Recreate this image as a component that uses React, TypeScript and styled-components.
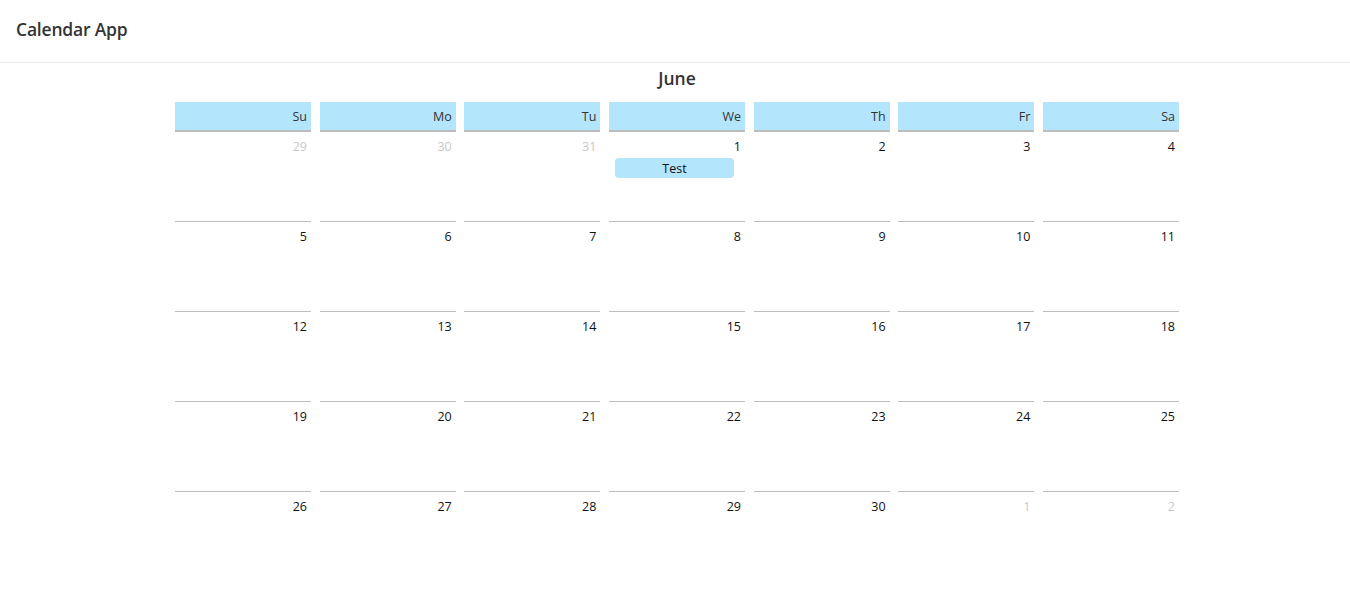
import styled, { createGlobalStyle } from "styled-components"

const GlobalStyle = createGlobalStyle`
  html, body {
    margin: 0;
    padding: 0;
    background: #fff;
    font-family: "Open Sans", "Noto Sans", sans-serif;
    color: #222;
  }
`

const TopBar = styled.header`
  height: 63px;
  display: flex;
  align-items: center;
  padding: 0 16px 4px;
  box-sizing: border-box;
  border-bottom: 1px solid #ebebeb;
`

const AppTitle = styled.h1`
  margin: 0;
  font-size: 17.5px;
  font-weight: 600;
  color: #333;
  letter-spacing: -0.2px;
`

const Main = styled.main`
  width: 1004px;
  margin: 0 0 0 175px;
`

const MonthTitle = styled.h2`
  margin: 0 0 9px;
  height: 30px;
  display: flex;
  align-items: center;
  justify-content: center;
  font-size: 17.5px;
  font-weight: 600;
  color: #333;
`

const Grid = styled.div`
  display: grid;
  grid-template-columns: repeat(7, 1fr);
  column-gap: 8.67px;
`

const DayHead = styled.div`
  height: 28px;
  background: #b3e5fc;
  border-bottom: 2px solid #bdbdbd;
  display: flex;
  align-items: center;
  justify-content: flex-end;
  padding-right: 4px;
  font-size: 12.5px;
  color: #333;
`

const Cell = styled.div<{ $first?: boolean }>`
  height: 89px;
  margin-top: ${p => (p.$first ? "-1px" : "0")};
  border-top: ${p => (p.$first ? "none" : "1px solid #bdbdbd")};
  padding-top: ${p => (p.$first ? "1px" : "0")};
  display: flex;
  flex-direction: column;
`

const DayNum = styled.div<{ $muted?: boolean }>`
  text-align: right;
  padding: 6px 4px 0 0;
  font-size: 12.5px;
  line-height: 17px;
  color: ${p => (p.$muted ? "#c8c8c8" : "#111")};
`

const Event = styled.div`
  margin: 3px 0 0 6px;
  width: 119px;
  height: 20px;
  border-radius: 4px;
  background: #b3e5fc;
  display: flex;
  align-items: center;
  justify-content: center;
  font-size: 12.5px;
  color: #111;
`

const days = ["Su", "Mo", "Tu", "We", "Th", "Fr", "Sa"]

const cells: { n: number; muted?: boolean; events?: string[] }[] = [
  { n: 29, muted: true },
  { n: 30, muted: true },
  { n: 31, muted: true },
  { n: 1, events: ["Test"] },
  ...Array.from({ length: 29 }, (_, i) => ({ n: i + 2 })),
  { n: 1, muted: true },
  { n: 2, muted: true },
]

export default function App() {
  return (
    <>
      <GlobalStyle />
      <TopBar>
        <AppTitle>Calendar App</AppTitle>
      </TopBar>
      <Main>
        <MonthTitle>June</MonthTitle>
        <Grid>
          {days.map(d => (
            <DayHead key={d}>{d}</DayHead>
          ))}
          {cells.map((c, i) => (
            <Cell key={i} $first={i < 7}>
              <DayNum $muted={c.muted}>{c.n}</DayNum>
              {c.events?.map(e => (
                <Event key={e}>{e}</Event>
              ))}
            </Cell>
          ))}
        </Grid>
      </Main>
    </>
  )
}
